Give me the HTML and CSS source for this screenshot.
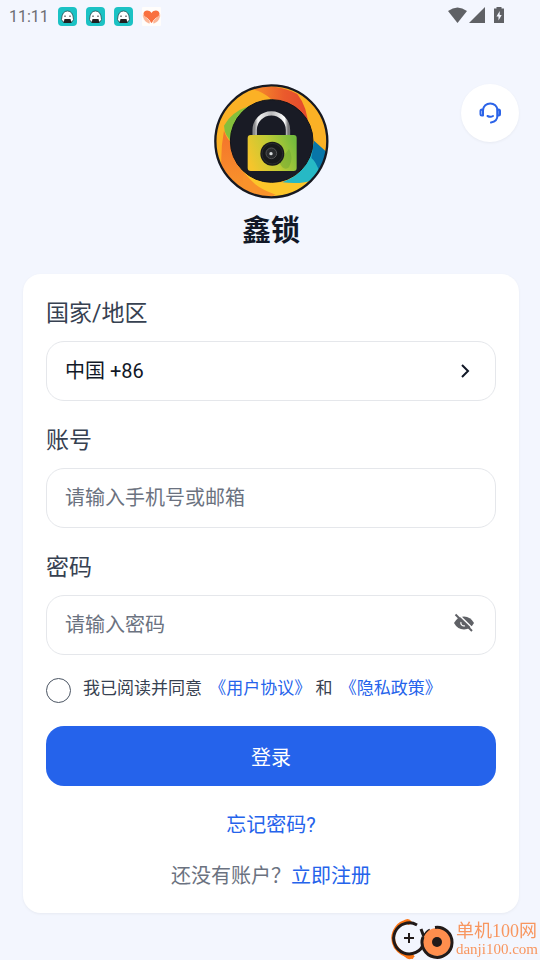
FILE: index.html
```html
<!DOCTYPE html>
<html lang="zh-CN">

<head>
    <meta charset="UTF-8">
    <meta name="viewport" content="width=device-width, initial-scale=1.0">
    <title>鑫锁</title>
    <link rel="stylesheet" href="styles.css">
</head>

<body>
    <div class="status">
        <span class="time">11:11</span>
        <svg class="app" viewBox="0 0 19 19"><use href="#ghost" /></svg>
        <svg class="app" viewBox="0 0 19 19"><use href="#ghost" /></svg>
        <svg class="app" viewBox="0 0 19 19"><use href="#ghost" /></svg>
        <svg class="app" viewBox="0 0 19 19">
            <rect width="19" height="19" rx="1" fill="#fffdfb" />
            <path d="M9.500 16C5 12 1.500 10 1.500 6.500C2 3 7 2.500 9.500 6C12 2.500 17 3 17.500 6.500C17.500 10 14 12 9.500 16Z" fill="#f9703f" />
            <path d="M0.500 7C0.500 13 4 16 8 17L8 14L4.500 10.500M18.500 7C18.500 13 15 16 11 17L11 14L14.500 10.500" fill="#fbb596" stroke="#fff" stroke-width=".6" />
        </svg>
        <svg class="signal" viewBox="0 0 58 20">
            <path d="M0 5Q9.500 -2 19 5L9.500 17Z" fill="#5f6165" />
            <path d="M37 1V17H21Z" fill="#5f6165" />
            <path d="M48.500 1H53.500V2.500H56V17H46V2.500H48.500Z" fill="#5f6165" />
            <path d="M51.700 5L48.500 10.500H50.500V14.500L53.700 9H51.700Z" fill="#f3f6fe" />
        </svg>
    </div>

    <!-- 顶部 logo -->
    <header class="header">
        <svg class="logo" viewBox="0 0 345 345">
            <defs>
                <clipPath id="round"><circle cx="172" cy="172" r="168" /></clipPath>
                <linearGradient id="body" x1="0" y1=".6" x2="1" y2=".3">
                    <stop offset="0" stop-color="#f5c52c" />
                    <stop offset=".5" stop-color="#bfcb35" />
                    <stop offset="1" stop-color="#74bb3d" />
                </linearGradient>
                <linearGradient id="steel" x1="0" y1="0" x2="1" y2="0">
                    <stop offset="0" stop-color="#8c8c8e" />
                    <stop offset=".1" stop-color="#f4f4f4" />
                    <stop offset=".5" stop-color="#b9b9bb" />
                    <stop offset=".9" stop-color="#fff" />
                    <stop offset="1" stop-color="#77777a" />
                </linearGradient>
                <linearGradient id="red" x1="0" y1="0" x2="1" y2="0">
                    <stop offset="0" stop-color="#f8962a" />
                    <stop offset=".6" stop-color="#ea5a2c" />
                    <stop offset="1" stop-color="#e4482c" />
                </linearGradient>
                <linearGradient id="orange" x1="0" y1="0" x2="0" y2="1">
                    <stop offset="0" stop-color="#f4722c" />
                    <stop offset="1" stop-color="#f99a2b" />
                </linearGradient>
            </defs>
            <g clip-path="url(#round)">
                <rect width="345" height="345" fill="#fbb125" />
                <path d="M105 14Q180 -6 250 30Q285 75 282 140L235 85Q190 45 172 46Q145 20 105 14Z" fill="url(#red)" />
                <path d="M30 125Q50 85 105 66L130 60L60 180Q30 155 30 125Z" fill="#84bf3c" />
                <path d="M30 140Q38 165 55 180L75 250Q110 295 165 296Q150 315 175 345H120Q50 320 22 245Q20 190 30 140Z" fill="url(#orange)" />
                <path d="M90 265Q150 295 205 295Q260 302 300 288L290 345H180Q130 315 90 265Z" fill="#fcc62a" />
                <path d="M90 268Q120 310 185 332L160 345L100 325Q80 300 90 268Z" fill="#f9922b" />
                <path d="M298 178L340 212Q330 260 300 288Q260 302 205 295Q285 265 298 178Z" fill="#27b9c5" />
                <path d="M300 170L342 208Q338 240 318 268Q305 230 292 222Z" fill="#0876a8" />
            </g>
            <circle cx="172" cy="172" r="168" fill="none" stroke="#171921" stroke-width="7" />
            <circle cx="173" cy="171" r="124" fill="#191b25" stroke="#11131a" stroke-width="3" />
            <path d="M122 155V138A50 50 0 0 1 222 138V155" fill="none" stroke="url(#steel)" stroke-width="13" />
            <rect x="101" y="153" width="147" height="108" rx="9" fill="url(#body)" />
            <path d="M195 235L225 195Q240 220 225 250Q215 258 205 250Z" fill="#6da831" opacity=".5" />
            <circle cx="175" cy="209" r="36" fill="#17191b" />
            <circle cx="175" cy="209" r="31" fill="none" stroke="#333537" stroke-width="2" />
            <circle cx="172" cy="208" r="16" fill="#292b2d" stroke="#515254" stroke-width="3" />
            <circle cx="171" cy="209" r="5" fill="#d8dcdc" />
        </svg>
        <h1 class="name">鑫锁</h1>
        <button class="service" type="button" aria-label="客服">
            <svg width="24" height="24" viewBox="0 0 24 24" fill="none" stroke="#2b63e8" stroke-width="2" stroke-linecap="round">
                <path d="M5 9.500C5 0 19.500 0 19.500 9.500V14Q19.500 20.500 13 21.500" />
                <path d="M5 8.500H4Q2.500 8.500 2.500 10V13Q2.500 14.500 4 14.500H5ZM19.500 8.500H20.500Q22 8.500 22 10V13Q22 14.500 20.500 14.500H19.500Z" stroke-linejoin="round" />
                <path d="M9.500 15Q12.500 16.500 15 15" />
            </svg>
        </button>
    </header>

    <form class="card">
        <div class="field">
            <label for="area">国家/地区</label>
            <div class="control">
                <select id="area">
                    <option>中国 +86</option>
                </select>
                <svg class="arrow" width="18" height="20" viewBox="0 0 18 20">
                    <path d="M5 4L11 10L5 16" fill="none" stroke="#111827" stroke-width="2" />
                </svg>
            </div>
        </div>
        <div class="field">
            <label for="account">账号</label>
            <div class="control">
                <input id="account" type="text" placeholder="请输入手机号或邮箱">
            </div>
        </div>
        <div class="field">
            <label for="pwd">密码</label>
            <div class="control">
                <input id="pwd" type="password" placeholder="请输入密码">
                <button class="eye" type="button" aria-label="显示密码">
                    <svg width="22" height="20" viewBox="0 0 22 20">
                        <path d="M1 10Q4.500 3.500 11 3.500T21 10Q17.500 16.500 11 16.500T1 10Z" fill="#5f6166" />
                        <path d="M8 9A3 3 0 0 0 12 12.700" fill="none" stroke="#fff" stroke-width="1.200" />
                        <path d="M4 0L21 16.500" stroke="#fff" stroke-width="1.500" />
                        <path d="M2.500 1.500L19 18" stroke="#5f6166" stroke-width="2" />
                    </svg>
                </button>
            </div>
        </div>
        <div class="agree">
            <input id="agree" type="checkbox">
            <p><label for="agree">我已阅读并同意</label> <a href="#">《用户协议》</a> 和 <a href="#">《隐私政策》</a></p>
        </div>
        <button class="login" type="submit">登录</button>
        <a class="forget" href="#">忘记密码?</a>
        <p class="register">还没有账户？<a href="#">立即注册</a></p>
    </form>

    <div class="mark">
        <svg width="64" height="42" viewBox="0 0 64 42" fill="none">
            <path d="M22 4Q12 -1 5 9Q-2 19 4 30Q10 39 23 41L24 37Q12 36 7 27Q2 17 9 9Q14 4 22 4Z" fill="#fb7414" />
            <path d="M12 4Q18 -2 22 4L19 7ZM13 37Q20 45 25 38Z" fill="#fb7414" />
            <path d="M27 7A15.500 15.500 0 1 0 34 25" stroke="#211a19" stroke-width="3" />
            <path d="M31 11L34 19Q36 14 40 12" stroke="#211a19" stroke-width="3" />
            <circle cx="47" cy="24" r="14" fill="#ff8e4d" />
            <path d="M45 9.500A15 15 0 1 1 33 19" stroke="#211a19" stroke-width="3" />
            <circle cx="47" cy="24" r="5" fill="#211a19" />
            <path d="M14 20H24M19 15V25" stroke="#211a19" stroke-width="2" />
        </svg>
        <div class="mark_text">
            <span class="mark_cn">单机100网</span>
            <span class="mark_en">danji100.com</span>
        </div>
    </div>

    <svg width="0" height="0" class="sprite">
        <symbol id="ghost" viewBox="0 0 19 19">
            <rect width="19" height="19" rx="4" fill="#1bc2c4" />
            <path d="M3.500 12.500Q4 4 9.500 4Q15 4 15.500 12.500L14 15H5Z" fill="#fff" stroke="#234b50" stroke-width=".8" />
            <path d="M6.500 12H12.500L13.500 16H5.500Z" fill="#201f20" />
            <path d="M7 8.500V10M12 8.500V10" stroke="#201f20" />
        </symbol>
    </svg>
</body>

</html>
```

FILE: styles.css
```css
* {
    box-sizing: border-box;
    margin: 0;
    padding: 0;
}

body {
    min-height: 100vh;
    background-color: #f3f6fe;
    color: #374151;
    font-family: Roboto, "Noto Sans CJK SC", sans-serif;
    font-size: 20px;
}

button,
input,
select {
    font: inherit;
    border: none;
    background: none;
}

a {
    color: #2563eb;
    text-decoration: none;
}

svg {
    display: block;
}

.sprite {
    position: absolute;
}

.status {
    display: flex;
    align-items: center;
    gap: 9px;
    height: 32px;
    padding: 0 34px 0 9px;
}

.time {
    color: #6b6d72;
    font-size: 16px;
}

.app {
    width: 19px;
    height: 19px;
}

.signal {
    width: 58px;
    height: 20px;
    margin-left: auto;
}

.header {
    display: grid;
    grid-template-columns: 58px 1fr 58px;
    justify-items: center;
    padding: 52px 21px 25px 23px;
}

.logo {
    grid-column: 2;
    width: 115px;
    height: 115px;
}

.name {
    grid-column: 2;
    grid-row: 2;
    margin-top: 14px;
    color: #111827;
    font-size: 29px;
    line-height: 36px;
}

.service {
    grid-column: 3;
    grid-row: 1;
    display: flex;
    align-items: center;
    justify-content: center;
    width: 58px;
    height: 58px;
    border-radius: 50%;
    background-color: #fff;
    box-shadow: 0 1px 3px rgba(0, 0, 0, 0.05);
}

.card {
    display: flex;
    flex-direction: column;
    gap: 23px;
    margin: 0 21px 0 23px;
    padding: 23px;
    border-radius: 18px;
    background-color: #fff;
    box-shadow: 0 1px 3px rgba(0, 0, 0, 0.05);
}

.field label {
    display: block;
    margin-bottom: 10px;
    font-size: 23px;
    line-height: 34px;
}

.control {
    display: flex;
    align-items: center;
    height: 60px;
    padding: 0 20px 0 18px;
    border: 1px solid #e5e7eb;
    border-radius: 18px;
}

.control input,
.control select {
    flex: 1;
    min-width: 0;
    height: 100%;
    appearance: none;
    outline: none;
    color: #111827;
}

.control input::placeholder {
    color: #6b7280;
}

.eye {
    margin-bottom: 4px;
}

.agree {
    display: flex;
    gap: 12px;
    height: 25px;
    font-size: 17px;
    line-height: 20px;
}

.agree input {
    width: 25px;
    height: 25px;
    border: 1px solid #4b5563;
    border-radius: 50%;
    appearance: none;
}

.agree a {
    margin-left: 3px;
}

.login {
    height: 60px;
    border-radius: 18px;
    background-color: #2563eb;
    color: #fff;
}

.forget,
.register {
    line-height: 28px;
    text-align: center;
}

.forget {
    margin-top: 2px;
}

.register {
    color: #6b7280;
}

/* 右下角水印 */
.mark {
    position: fixed;
    right: 2px;
    bottom: 0;
    display: flex;
    align-items: center;
    gap: 2px;
}

.mark_text {
    display: flex;
    flex-direction: column;
    color: #f8965f;
    font-family: "Liberation Serif", "Noto Sans CJK SC", serif;
}

.mark_cn {
    font-size: 18px;
    line-height: 20px;
}

.mark_en {
    font-size: 15px;
    line-height: 16px;
}
```
